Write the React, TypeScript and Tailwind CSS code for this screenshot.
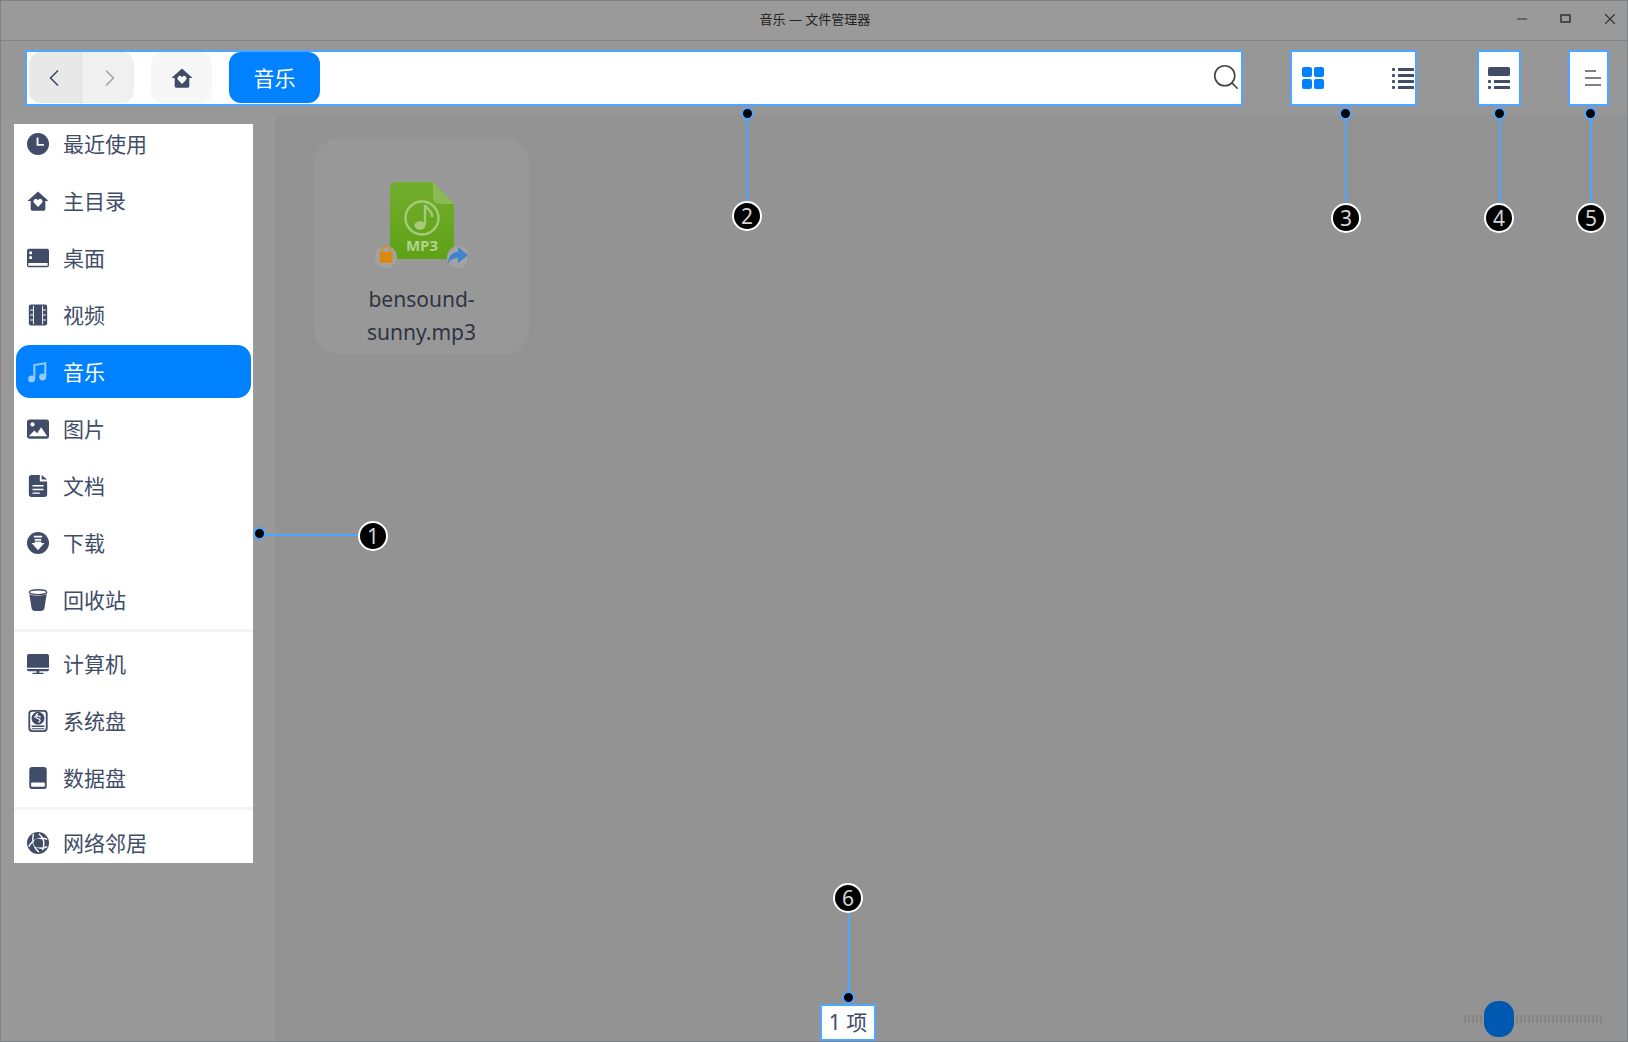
import React from 'react';
import { ChevronLeft, ChevronRight, Search, Minus, X } from 'lucide-react';

const cjk = { fontFamily: '"Noto Sans", "Noto Sans CJK SC", sans-serif' };

const HomeIcon: React.FC<{ className?: string }> = ({ className }) => (
  <svg viewBox="0 0 24 24" className={className} fill="currentColor">
    <path d="M12 1.500 23.500 12H20v9a1.500 1.500 0 0 1-1.500 1.500h-13A1.500 1.500 0 0 1 4 21v-9H.5z" />
    <path fill="#fff" d="M12 18.500 7.800 14.300a2.600 2.600 0 0 1 3.700-3.700l.5.5.5-.5a2.600 2.600 0 0 1 3.700 3.700z" />
  </svg>
);

const NavIcon: React.FC<{ name: string }> = ({ name }) => {
  const cls = 'w-[22px] h-[22px] shrink-0';
  switch (name) {
    case 'recent':
      return (
        <svg viewBox="0 0 24 24" className={cls}>
          <circle cx="12" cy="12" r="12" fill="currentColor" />
          <path d="M11.500 5v8h7" fill="none" stroke="#fff" strokeWidth="2" />
        </svg>
      );
    case 'home':
      return <HomeIcon className={cls} />;
    case 'desktop':
      return (
        <svg viewBox="0 0 24 24" className={cls}>
          <path fill="currentColor" d="M2 2h20a2 2 0 0 1 2 2v16a2 2 0 0 1-2 2H2a2 2 0 0 1-2-2V4a2 2 0 0 1 2-2z" />
          <path fill="#fff" d="M1.500 17.500h21v3h-21zM2.500 5h3v3h-3zM2.500 10h3v3h-3z" />
        </svg>
      );
    case 'video':
      return (
        <svg viewBox="0 0 24 24" className={cls}>
          <rect x="2" y="0.500" width="20" height="23" rx="2.500" fill="currentColor" />
          <path fill="#fff" d="M6.500 2h1v20h-1zM16.500 2h1v20h-1zM3.500 6h3v1h-3zM3.500 11.500h3v1h-3zM3.500 17h3v1h-3zM17.500 6h3v1h-3zM17.500 11.500h3v1h-3zM17.500 17h3v1h-3z" />
        </svg>
      );
    case 'music':
      return (
        <svg viewBox="0 0 24 24" className={cls}>
          <path d="M8 19V4.500l12-2V17" fill="none" stroke="currentColor" strokeWidth="2.200" />
          <circle cx="5" cy="19.500" r="3.800" fill="currentColor" />
          <circle cx="17" cy="17.500" r="3.800" fill="currentColor" />
        </svg>
      );
    case 'picture':
      return (
        <svg viewBox="0 0 24 24" className={cls}>
          <rect y="1.500" width="24" height="21" rx="3" fill="currentColor" />
          <circle cx="6" cy="7" r="2.300" fill="#fff" />
          <path fill="#fff" d="M2 20l6-6.500 3 3 4.500-6.500L22 20z" />
        </svg>
      );
    case 'doc':
      return (
        <svg viewBox="0 0 24 24" className={cls}>
          <path fill="currentColor" d="M5 0h9v7h8v14a3 3 0 0 1-3 3H5a3 3 0 0 1-3-3V3a3 3 0 0 1 3-3zM16 0l6 5h-6z" />
          <path fill="#fff" d="M6 11h12v1.500H6zM6 15h12v1.500H6zM6 19h8v1.500H6z" />
        </svg>
      );
    case 'download':
      return (
        <svg viewBox="0 0 24 24" className={cls}>
          <circle cx="12" cy="12" r="12" fill="currentColor" />
          <path fill="#fff" d="M7.500 4h9v2h-9zM8.500 7.500h7V12h3.500L12 20 5 12h3.500z" />
          <path fill="currentColor" d="M8 9.500h8v1H8z" />
        </svg>
      );
    case 'trash':
      return (
        <svg viewBox="0 0 24 24" className={cls}>
          <path fill="currentColor" d="M2.500 5.500c3 2.500 16 2.500 19 0L19 21c-.3 2-2 3-3.500 3h-7C7 24 5.300 23 5 21z" />
          <ellipse cx="12" cy="3.500" rx="9.500" ry="2.700" fill="none" stroke="currentColor" strokeWidth="1.400" />
        </svg>
      );
    case 'computer':
      return (
        <svg viewBox="0 0 24 24" className={cls}>
          <path fill="currentColor" d="M2 1h20a2 2 0 0 1 2 2v13H0V3a2 2 0 0 1 2-2zM0 17.500h24V18a2 2 0 0 1-2 2H2a2 2 0 0 1-2-2zM10.500 20h3v1.500H18V23H6v-1.500h4.500z" />
        </svg>
      );
    case 'system':
      return (
        <svg viewBox="0 0 24 24" className={cls}>
          <rect x="2.500" y="1" width="19" height="22" rx="3" fill="none" stroke="currentColor" strokeWidth="2" />
          <circle cx="12" cy="9" r="7" fill="currentColor" />
          <path d="M12 4c-3 1-3 5 0 5.500s3 3 .5 4M8 8c1.500-2 5-2 7 0" fill="none" stroke="#fff" strokeWidth="1.300" />
          <path fill="currentColor" d="M5 17h14v1.500H5zM5 20h14v1H5z" />
        </svg>
      );
    case 'data':
      return (
        <svg viewBox="0 0 24 24" className={cls}>
          <path fill="currentColor" d="M5.500 0h13a3 3 0 0 1 3 3v18a3 3 0 0 1-3 3h-13a3 3 0 0 1-3-3V3a3 3 0 0 1 3-3z" />
          <rect x="4.500" y="17" width="15" height="4.500" rx="1" fill="#fff" />
        </svg>
      );
    default:
      return (
        <svg viewBox="0 0 24 24" className={cls}>
          <circle cx="12" cy="12" r="12" fill="currentColor" />
          <path d="M7 2c-2 7 0 15 6 20M22 8C15 5 6 8 2 16M22 16c-3 2-9 3-14-1M13 2c5 4 7 10 4 18" fill="none" stroke="#fff" strokeWidth="1.500" />
          <circle cx="12" cy="12" r="5" fill="currentColor" />
        </svg>
      );
  }
};

const NavRow: React.FC<{ icon: string; label: string; active?: boolean }> = ({ icon, label, active }) => (
  <div
    className={`mx-[2px] h-[53px] mb-[4px] flex items-center gap-[14px] pl-[11px] rounded-[14px] text-[21px] ${
      active ? 'bg-[#0081ff] text-white' : 'text-[#414d68]'
    }`}
  >
    <span className={active ? 'text-[#8fcbff]' : ''}>
      <NavIcon name={icon} />
    </span>
    <span className="leading-none pt-[2px]">{label}</span>
  </div>
);

const Sidebar = () => (
  <div className="ml-[13px] mt-[9px] w-[239px] h-[739px] bg-white overflow-hidden">
    <div className="mt-[-7px]">
      <NavRow icon="recent" label="最近使用" />
      <NavRow icon="home" label="主目录" />
      <NavRow icon="desktop" label="桌面" />
      <NavRow icon="video" label="视频" />
      <NavRow icon="music" label="音乐" active />
      <NavRow icon="picture" label="图片" />
      <NavRow icon="doc" label="文档" />
      <NavRow icon="download" label="下载" />
      <NavRow icon="trash" label="回收站" />
      <div className="h-[3px] bg-[#f3f3f3] mt-[-1px] mb-[5px]" />
      <NavRow icon="computer" label="计算机" />
      <NavRow icon="system" label="系统盘" />
      <NavRow icon="data" label="数据盘" />
      <div className="h-[3px] bg-[#f3f3f3] mt-[-1px] mb-[6px]" />
      <NavRow icon="network" label="网络邻居" />
    </div>
  </div>
);

const FileIcon = () => (
  <svg viewBox="0 0 100 100" className="w-[100px] h-[100px] mr-[10px]" style={{ fontFamily: '"Noto Sans", sans-serif' }}>
    <defs>
      <linearGradient id="green" x1="0" y1="0" x2="0" y2="1">
        <stop offset="0" stopColor="#74ad2f" />
        <stop offset="1" stopColor="#5da215" />
      </linearGradient>
    </defs>
    <path fill="url(#green)" d="M23 14a6 6 0 0 1 6-6h37l21 22v50a5 5 0 0 1-5 5H28a5 5 0 0 1-5-5z" />
    <path fill="#8bba55" d="M66 8l21 22H72a6 6 0 0 1-6-6z" />
    <circle cx="55" cy="44" r="16.500" fill="none" stroke="#a6ca7b" strokeWidth="2.400" />
    <path d="M58 31v20M58 31c2 5 8 5 7 12" fill="none" stroke="#a6ca7b" strokeWidth="2.400" />
    <ellipse cx="53" cy="51.500" rx="5.500" ry="4.200" fill="#a6ca7b" />
    <text x="55" y="77" textAnchor="middle" fontSize="15" fontWeight="700" fill="#b3d18f">MP3</text>
    <circle cx="19" cy="83" r="11" fill="#a3a3a3" />
    <path d="M15 78v-1.500a4 4 0 0 1 8 0V78" fill="none" stroke="#d98a12" strokeWidth="1.500" />
    <rect x="12.500" y="78" width="13" height="11" rx="1" fill="#d98a12" />
    <circle cx="91" cy="83" r="11" fill="#a3a3a3" />
    <path fill="#3f82cf" d="M91 73l10 8-10 8v-5c-5 0-8 2-10 6 0-7 4-12 10-12z" />
  </svg>
);

const Callouts = () => {
  const lines = [
    'left-[745px] top-[113px] w-[2px] h-[90px]',
    'left-[1344px] top-[113px] w-[2px] h-[92px]',
    'left-[1498px] top-[113px] w-[2px] h-[92px]',
    'left-[1589px] top-[113px] w-[2px] h-[92px]',
    'left-[847px] top-[910px] w-[2px] h-[87px]',
    'left-[259px] top-[533px] w-[100px] h-[2px]',
  ];
  const dots = [
    'left-[252px] top-[526px]',
    'left-[740px] top-[106px]',
    'left-[1338px] top-[106px]',
    'left-[1492px] top-[106px]',
    'left-[1583px] top-[106px]',
    'left-[841px] top-[990px]',
  ];
  const badges = [
    { n: '1', c: 'left-[357px] top-[520px]' },
    { n: '2', c: 'left-[731px] top-[200px]' },
    { n: '3', c: 'left-[1330px] top-[202px]' },
    { n: '4', c: 'left-[1483px] top-[202px]' },
    { n: '5', c: 'left-[1575px] top-[202px]' },
    { n: '6', c: 'left-[832px] top-[882px]' },
  ];
  return (
    <>
      {lines.map((c) => (
        <div key={c} className={`absolute bg-[#4da6ff] ${c}`} />
      ))}
      {dots.map((c) => (
        <div key={c} className={`absolute w-[13px] h-[13px] rounded-full bg-black border-2 border-[#4da6ff] ${c}`} />
      ))}
      {badges.map((b) => (
        <div
          key={b.n}
          className={`absolute w-[30px] h-[30px] rounded-full bg-black border-2 border-white flex items-center justify-center text-[21px] leading-none text-[#d4d4d4] ${b.c}`}
        >
          {b.n}
        </div>
      ))}
    </>
  );
};

const App: React.FC = () => {
  const ticks = Array.from({ length: 35 }, (_, i) => i);

  return (
    <div
      className="relative w-[1628px] h-[1042px] overflow-hidden flex flex-col bg-[#939393] border border-[#7f8283]"
      style={cjk}
    >
      {/* Title bar */}
      <div className="h-[40px] shrink-0 flex items-center bg-[#9a9a9a] border-b border-[#858585] text-[#222] relative">
        <div className="w-full text-center text-[13px] mt-[-2px] pl-[2px]">音乐 — 文件管理器</div>
        <Minus className="absolute left-[1513px] top-[10px] w-[16px] h-[16px] text-[#333]" strokeWidth={1.500} />
        <div className="absolute left-[1559px] top-[13px] w-[11px] h-[9px] border-2 border-[#4a4a4a] rounded-[1px]" />
        <X className="absolute left-[1600px] top-[9px] w-[18px] h-[18px] text-[#333]" strokeWidth={1.500} />
      </div>

      {/* Toolbar */}
      <div className="h-[74px] shrink-0 bg-[#979797] flex items-start pt-[9px] pl-[24px]">
        <div className="w-[1218px] h-[56px] bg-white border-2 border-[#4da6ff] flex items-start pl-[2px]">
          <div className="h-[51px] flex rounded-[12px] overflow-hidden">
            <div className="w-[53px] pr-[2px] bg-[#e8e8e8] border-r border-[#dcdcdc] flex items-center justify-center">
              <ChevronLeft className="w-[28px] h-[28px] text-[#414d68]" strokeWidth={1.500} />
            </div>
            <div className="w-[52px] pl-[3px] bg-[#f0f0f0] flex items-center justify-center">
              <ChevronRight className="w-[28px] h-[28px] text-[#a8a8a8]" strokeWidth={1.500} />
            </div>
          </div>
          <div className="ml-[17px] w-[61px] h-[51px] rounded-[12px] bg-[#f7f7f7] flex items-center justify-center text-[#414d68]">
            <HomeIcon className="w-[22px] h-[22px]" />
          </div>
          <div className="ml-[17px] w-[91px] h-[51px] rounded-[12px] bg-[#0081ff] text-white text-[21px] flex items-center justify-center pt-[2px]">
            音乐
          </div>
          <Search className="ml-auto mt-[10px] w-[30px] h-[30px] text-[#444]" strokeWidth={1.300} />
        </div>

        <div className="ml-[47px] w-[127px] h-[56px] bg-white border-2 border-[#4da6ff] flex items-center justify-between pl-[10px] pr-[1px]">
          <svg viewBox="0 0 22 22" className="w-[22px] h-[22px]" fill="#0081ff">
            <rect width="10" height="10" rx="2" />
            <rect x="12" width="10" height="10" rx="2" />
            <rect y="12" width="10" height="10" rx="2" />
            <rect x="12" y="12" width="10" height="10" rx="2" />
          </svg>
          <svg viewBox="0 0 22 22" className="w-[22px] h-[22px]" fill="#414d68">
            <rect y="1" width="3" height="3" rx="1" />
            <rect y="7" width="3" height="3" rx="1" />
            <rect y="13" width="3" height="3" rx="1" />
            <rect y="19" width="3" height="3" rx="1" />
            <rect x="6" y="1" width="16" height="3" rx="0.500" />
            <rect x="6" y="7" width="16" height="3" rx="0.500" />
            <rect x="6" y="13" width="16" height="3" rx="0.500" />
            <rect x="6" y="19" width="16" height="3" rx="0.500" />
          </svg>
        </div>

        <div className="ml-[60px] w-[44px] h-[56px] bg-white border-2 border-[#4da6ff] flex items-center justify-center">
          <svg viewBox="0 0 22 22" className="w-[22px] h-[22px]" fill="#414d68">
            <rect width="22" height="9" rx="1.500" />
            <rect y="13" width="3" height="3" rx="1" />
            <rect y="19" width="3" height="3" rx="1" />
            <rect x="6" y="13" width="16" height="3" rx="0.500" />
            <rect x="6" y="19" width="16" height="3" rx="0.500" />
          </svg>
        </div>

        <div className="ml-[47px] w-[41px] h-[56px] bg-white border-2 border-[#4da6ff] flex items-center justify-end pr-[6px]">
          <svg viewBox="0 0 16 16" className="w-[16px] h-[16px]" stroke="#555" strokeWidth="1.500">
            <path d="M0 1h11M0 8h16M0 15h16" />
          </svg>
        </div>
      </div>

      {/* Body */}
      <div className="flex-1 flex min-h-0">
        <div className="w-[274px] shrink-0 bg-[#999999]">
          <Sidebar />
        </div>
        <div className="flex-1 flex flex-col justify-between">
          <div className="ml-[39px] mt-[24px] w-[215px] h-[215px] rounded-[24px] bg-[#989898] flex flex-col items-center pt-[35px]">
            <FileIcon />
            <div className="text-center text-[21px] leading-[33px] text-[#2f3542] mt-[9px]">
              bensound-
              <br />
              sunny.mp3
            </div>
          </div>
          <div className="h-[41px] flex items-start">
            <div className="ml-[545px] mt-[4px] w-[56px] h-[37px] bg-white border-2 border-[#4da6ff] flex items-center justify-center text-[21px] text-[#414d68]">
              1 项
            </div>
            <div className="relative ml-auto mr-[25px] mt-[15px] h-[8px] flex gap-[2px]">
              {ticks.map((t) => (
                <span key={t} className="w-[2px] h-[8px] bg-[#858585]" />
              ))}
              <div className="absolute left-[20px] top-[-14px] w-[30px] h-[36px] rounded-[14px] bg-[#0059b0]" />
            </div>
          </div>
        </div>
      </div>

      <Callouts />
    </div>
  );
};

export default App;
